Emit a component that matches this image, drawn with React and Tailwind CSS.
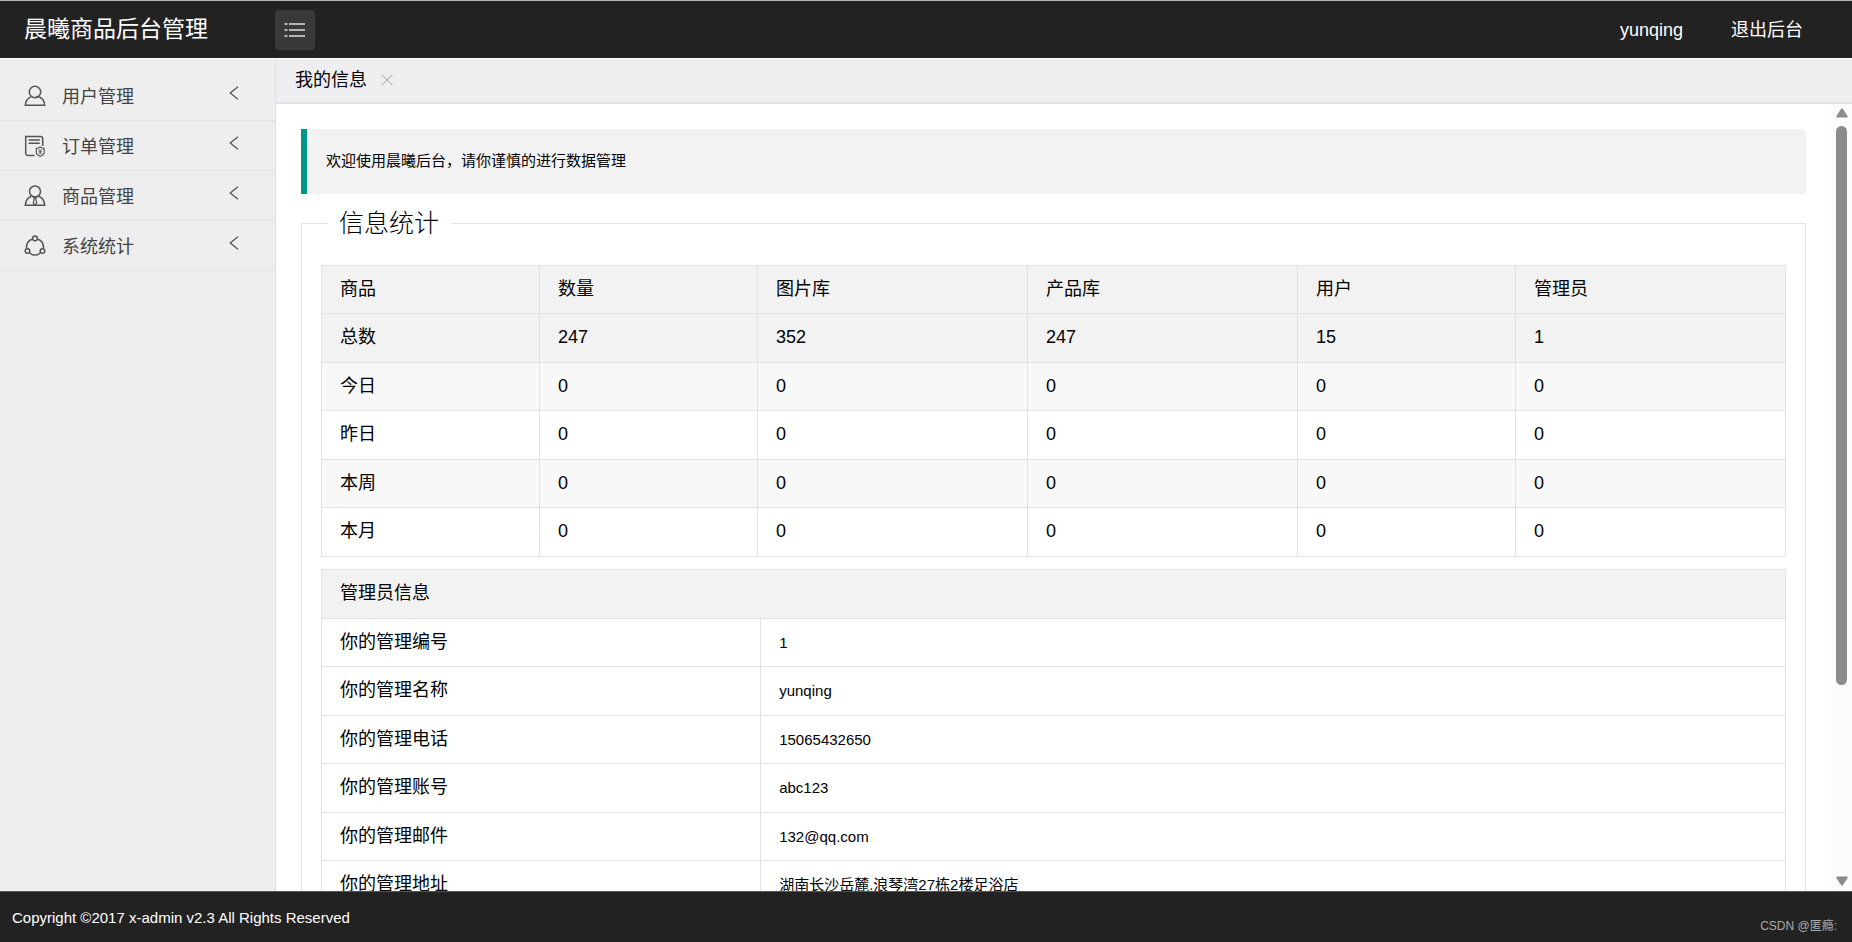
import React, { useState } from 'react';

const statHeaders = ['商品', '数量', '图片库', '产品库', '用户', '管理员'];

const statRows = [
  { name: '总数', values: [247, 352, 247, 15, 1] },
  { name: '今日', values: [0, 0, 0, 0, 0] },
  { name: '昨日', values: [0, 0, 0, 0, 0] },
  { name: '本周', values: [0, 0, 0, 0, 0] },
  { name: '本月', values: [0, 0, 0, 0, 0] },
];

const adminRows = [
  ['你的管理编号', '1'],
  ['你的管理名称', 'yunqing'],
  ['你的管理电话', '15065432650'],
  ['你的管理账号', 'abc123'],
  ['你的管理邮件', '132@qq.com'],
  ['你的管理地址', '湖南长沙岳麓.浪琴湾27栋2楼足浴店'],
];

const Icon = ({ children }) => (
  <svg
    viewBox="0 0 22 22"
    className="h-[22px] w-[22px] shrink-0"
    fill="none"
    stroke="#555"
    strokeWidth="1.5"
    aria-hidden="true"
  >
    {children}
  </svg>
);

const UserIcon = () => (
  <Icon>
    <circle cx="11" cy="7" r="5.7" />
    <path d="M7.3 11.6C3.8 13 1.6 16 1.3 20.2h19.4c-.3-3.6-2-6.8-5.2-8.2-1.2-.5-2.4-.5-3.6-.2" />
  </Icon>
);

const OrderIcon = () => (
  <Icon>
    <path d="M10.5 20.6H4.2A2.4 2.4 0 0 1 1.7 18.3V1.6h15.2a1.8 1.8 0 0 1 1.8 1.8V11" />
    <path d="M4.6 5h11.2M4.6 8.2h11.2" />
    <path d="M12.3 13.3c1.5 0 2.7-.4 3.9-1.3 1.200.9 2.4 1.3 3.9 1.3v4.2c0 1.700-1.500 2.900-3.900 3.700-2.400-.8-3.900-2-3.900-3.700z" strokeWidth="1.2" />
    <path d="M14.4 14l1.8 2 1.8-2M16.2 16v3.4M14.500 16.400h3.400M14.500 18h3.400" strokeWidth="0.8" />
  </Icon>
);

const GoodsIcon = () => (
  <Icon>
    <circle cx="11" cy="6.5" r="5.5" />
    <path d="M7.3 11.3C3.8 12.7 1.6 16 1.3 20.2h19.4c-.3-4.2-2.5-7.5-6-8.9" />
    <path d="M9.6 12.6h2.8l-.6 1.8 1 3.6-1.8 1.8-1.8-1.800 1-3.600z" strokeWidth="1.2" />
  </Icon>
);

const ShareIcon = () => (
  <Icon>
    <circle cx="11" cy="3.4" r="2.3" />
    <circle cx="3.5" cy="16" r="2.3" />
    <circle cx="18.5" cy="16" r="2.3" />
    <path d="M8.6 4C4.6 5.3 2.1 9 2.500 13.600M13.4 4c4 1.3 6.5 5 6.1 9.6M5.5 17.7c3.2 3.2 7.8 3.2 11 0" />
  </Icon>
);

const menus = [
  { title: '用户管理', icon: UserIcon },
  { title: '订单管理', icon: OrderIcon },
  { title: '商品管理', icon: GoodsIcon },
  { title: '系统统计', icon: ShareIcon },
];

const Header = ({ onToggle }) => (
  <header className="flex h-[59px] shrink-0 items-center border-t border-t-[#b5b8b8] border-b border-b-white bg-[#222] text-lg text-white">
    <h1 className="w-[275px] shrink-0 pl-6 text-[23px]">晨曦商品后台管理</h1>
    <button
      type="button"
      aria-label="切换菜单"
      onClick={onToggle}
      className="flex h-10 w-10 items-center justify-center rounded bg-[#393939]"
    >
      <svg viewBox="0 0 22 16" className="h-4 w-[22px]" fill="none" stroke="#ddd" strokeWidth="1.6">
        <path d="M5 2h16M5 8h16M5 14h16" />
        <path d="M.5 2h3M.5 8h3M.5 14h3" />
      </svg>
    </button>
    <nav className="ml-auto flex gap-12 pr-[49px]">
      <a href="#user">yunqing</a>
      <a href="#logout">退出后台</a>
    </nav>
  </header>
);

const Sidebar = () => (
  <aside className="w-[276px] shrink-0 border-r border-[#e0e0e0] bg-[#eee] pt-3">
    <ul>
      {menus.map(({ title, icon: MenuIcon }) => (
        <li key={title} className="border-b border-[#e2e2e2]">
          <a href="#menu" className="flex h-[49px] items-center pr-9 pl-6 text-[#444]">
            <MenuIcon />
            <span className="ml-4 flex-1 pt-[2px] text-lg">{title}</span>
            <svg viewBox="0 0 10 14" className="mb-[6px] h-[14px] w-[10px]" fill="none" stroke="#555" strokeWidth="1.3">
              <path d="M9 .7L1.2 7 9 13.3" />
            </svg>
          </a>
        </li>
      ))}
    </ul>
  </aside>
);

const StatTable = () => (
  <table className="w-full table-fixed border-collapse text-left text-lg leading-6">
    <colgroup>
      <col className="w-[218px]" />
      <col className="w-[218px]" />
      <col className="w-[270px]" />
      <col className="w-[270px]" />
      <col className="w-[218px]" />
      <col className="w-[270px]" />
    </colgroup>
    <thead>
      <tr className="h-12 bg-[#f2f2f2]">
        {statHeaders.map((item) => (
          <th key={item} className="border border-[#e2e2e2] px-[18px] pb-[2px] font-normal">{item}</th>
        ))}
      </tr>
    </thead>
    <tbody>
      {statRows.map((row) => (
        <tr key={row.name} className="first:bg-[#f2f2f2] odd:h-[49px] even:h-12 even:bg-[#f8f8f8]">
          <th scope="row" className="border border-[#e2e2e2] px-[18px] pb-[2px] font-normal">{row.name}</th>
          {row.values.map((value, i) => (
            <td key={i} className="border border-[#e2e2e2] px-[18px] pb-[2px]">{value}</td>
          ))}
        </tr>
      ))}
    </tbody>
  </table>
);

const AdminTable = () => (
  <table className="mt-3 w-full table-fixed border-collapse text-left text-lg leading-6">
    <colgroup>
      <col className="w-[30%]" />
      <col />
    </colgroup>
    <thead>
      <tr className="h-[49px] bg-[#f2f2f2]">
        <th colSpan={2} className="border border-[#e2e2e2] px-[18px] pb-[2px] font-normal">管理员信息</th>
      </tr>
    </thead>
    <tbody>
      {adminRows.map(([label, value]) => (
        <tr key={label} className="odd:h-12 even:h-[49px]">
          <th scope="row" className="border border-[#e2e2e2] px-[18px] pb-[2px] font-normal">{label}</th>
          <td className="border border-[#e2e2e2] px-[18px] text-[15px]">{value}</td>
        </tr>
      ))}
    </tbody>
  </table>
);

const Scrollbar = () => (
  <div className="flex w-[21px] shrink-0 flex-col items-center bg-[#fcfcfc] pt-1 pb-[5px]" aria-hidden="true">
    <svg viewBox="0 0 12 10" className="h-[10px] w-3" fill="#8b8b8b">
      <path d="M5.2.8Q6 0 6.8.8L11.6 8Q12 9.5 10.8 9.5H1.2Q0 9.5.4 8z" />
    </svg>
    <div className="mt-2 h-[559px] max-h-[85%] w-[11px] rounded-full bg-[#8b8b8b]" />
    <svg viewBox="0 0 12 10" className="mt-auto h-[10px] w-3" fill="#8b8b8b">
      <path d="M5.2 9.2Q6 10 6.8 9.2L11.6 2Q12 .5 10.8.5H1.2Q0 .5.4 2z" />
    </svg>
  </div>
);

const App = () => {
  const [menuOpen, setMenuOpen] = useState(true);

  return (
    <div className="flex h-screen flex-col overflow-hidden bg-white font-['Liberation_Sans','Noto_Sans_CJK_SC',sans-serif] text-black">
      <Header onToggle={() => setMenuOpen(!menuOpen)} />

      <div className="flex min-h-0 flex-1">
        {menuOpen && <Sidebar />}

        <div className="flex min-w-0 flex-1 flex-col">
          <div className="flex h-[45px] shrink-0 items-center border-b-2 border-[#e2e2e2] bg-[#eeeef0] pb-[2px] pl-[19px]">
            <span className="text-lg">我的信息</span>
            <button type="button" aria-label="关闭" className="ml-[14px]">
              <svg viewBox="0 0 12 12" className="h-3 w-3" fill="none" stroke="#c2c2c2" strokeWidth="1.3">
                <path d="M.5.5l11 11M11.5.5l-11 11" />
              </svg>
            </button>
          </div>

          <div className="flex min-h-0 flex-1">
            <main className="min-w-0 flex-1 overflow-y-auto pt-[25px] pr-[25px] pl-[25px] [scrollbar-width:none]">
              <blockquote className="flex h-[65px] items-center rounded-r-sm border-l-6 border-[#009688] bg-[#f2f2f2] pl-[19px] text-[15px]">
                欢迎使用晨曦后台，请你谨慎的进行数据管理
              </blockquote>

              <fieldset className="mt-[11px] min-w-0 border border-[#e2e2e2] px-[19px] pb-5">
                <legend className="ml-[6px] px-3 text-[25px] leading-9 font-light">信息统计</legend>
                <div className="pt-6">
                  <StatTable />
                  <AdminTable />
                </div>
              </fieldset>
            </main>
            <Scrollbar />
          </div>
        </div>
      </div>

      <footer className="relative flex h-[51px] shrink-0 items-center border-t border-[#555] bg-[#222] pt-[2px] pl-3 text-[15px] text-white">
        <p>Copyright ©2017 x-admin v2.3 All Rights Reserved</p>
        <span className="absolute right-[15px] bottom-2 text-xs text-[#aaa]">CSDN @匿瘾:</span>
      </footer>
    </div>
  );
};

export default App;
